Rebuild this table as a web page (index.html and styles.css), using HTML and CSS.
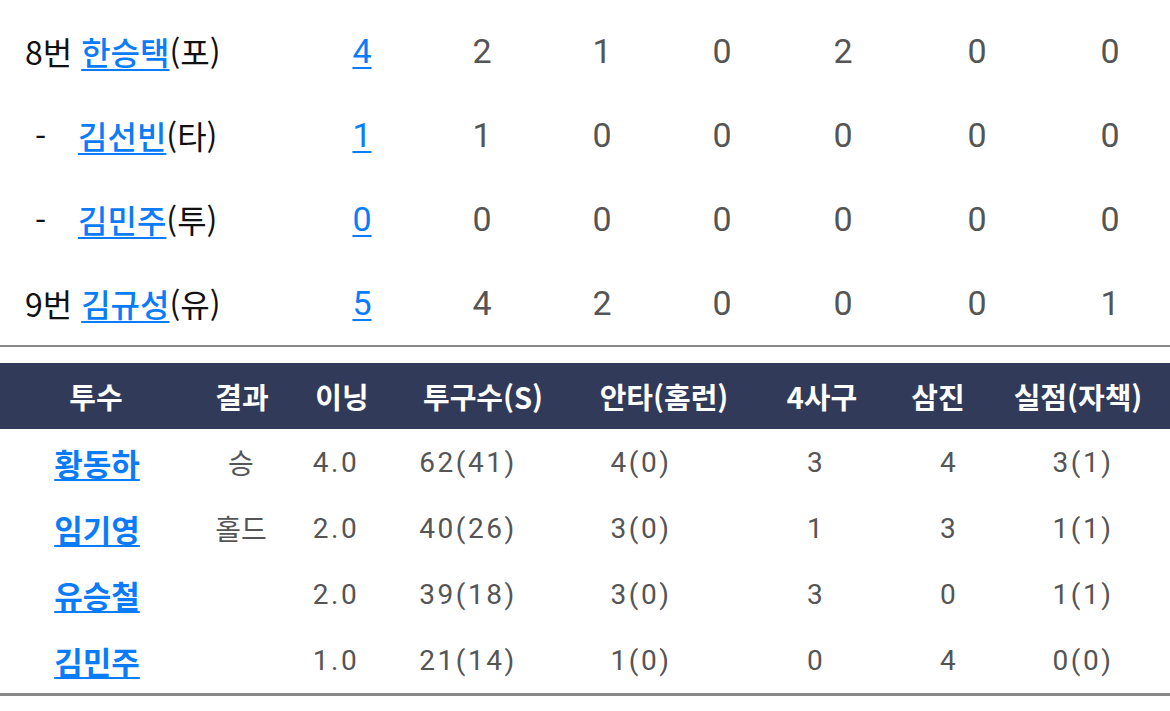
FILE: index.html
```html
<!DOCTYPE html>
<html lang="ko">
<head>
<meta charset="utf-8">
<link rel="stylesheet" href="styles.css">
</head>
<body>
<div class="batting">
  <div class="brow">
    <div class="bname">8번 <a href="#" class="plink">한승택</a>(포)</div>
    <div class="num"><a href="#" class="nlink">4</a></div>
    <div class="num">2</div><div class="num">1</div><div class="num">0</div><div class="num">2</div><div class="num">0</div><div class="num">0</div>
  </div>
  <div class="brow">
    <div class="bname"><span class="dash">-</span><a href="#" class="plink">김선빈</a>(타)</div>
    <div class="num"><a href="#" class="nlink">1</a></div>
    <div class="num">1</div><div class="num">0</div><div class="num">0</div><div class="num">0</div><div class="num">0</div><div class="num">0</div>
  </div>
  <div class="brow">
    <div class="bname"><span class="dash">-</span><a href="#" class="plink">김민주</a>(투)</div>
    <div class="num"><a href="#" class="nlink">0</a></div>
    <div class="num">0</div><div class="num">0</div><div class="num">0</div><div class="num">0</div><div class="num">0</div><div class="num">0</div>
  </div>
  <div class="brow">
    <div class="bname">9번 <a href="#" class="plink">김규성</a>(유)</div>
    <div class="num"><a href="#" class="nlink">5</a></div>
    <div class="num">4</div><div class="num">2</div><div class="num">0</div><div class="num">0</div><div class="num">0</div><div class="num">1</div>
  </div>
</div>

<div class="pitching">
  <div class="phead">
    <div>투수</div><div>결과</div><div>이닝</div><div>투구수(S)</div><div>안타(홈런)</div><div>4사구</div><div>삼진</div><div>실점(자책)</div>
  </div>
  <div class="prow">
    <div><a href="#" class="pname">황동하</a></div><div class="res">승</div><div>4.0</div><div>62(41)</div><div>4(0)</div><div>3</div><div>4</div><div>3(1)</div>
  </div>
  <div class="prow">
    <div><a href="#" class="pname">임기영</a></div><div class="res">홀드</div><div>2.0</div><div>40(26)</div><div>3(0)</div><div>1</div><div>3</div><div>1(1)</div>
  </div>
  <div class="prow">
    <div><a href="#" class="pname">유승철</a></div><div class="res"></div><div>2.0</div><div>39(18)</div><div>3(0)</div><div>3</div><div>0</div><div>1(1)</div>
  </div>
  <div class="prow">
    <div><a href="#" class="pname">김민주</a></div><div class="res"></div><div>1.0</div><div>21(14)</div><div>1(0)</div><div>0</div><div>4</div><div>0(0)</div>
  </div>
</div>
</body>
</html>
```

FILE: styles.css
```css
* { box-sizing: border-box; }
html, body { margin: 0; padding: 0; background: #fff; }
body {
  width: 1170px;
  font-family: Roboto, "Noto Sans CJK KR", sans-serif;
  overflow: hidden;
}

.batting {
  padding-top: 9px;
  border-bottom: 2px solid #888;
}
.brow {
  display: grid;
  grid-template-columns: 302px 120px 120px 120px 120px 122px 146px 120px;
  height: 84px;
  align-items: center;
}
.bname {
  padding-left: 25px;
  font-size: 32px;
  color: #111;
  font-family: "Noto Sans CJK KR", sans-serif;
  white-space: nowrap;
}
.dash {
  display: inline-block;
  margin-left: 10px;
  width: 43px;
}
.plink {
  color: #0a7cfa;
  font-weight: 500;
  text-decoration: underline;
  text-decoration-thickness: 2px;
  text-underline-offset: 4px;
}
.num {
  text-align: center;
  font-family: Roboto, sans-serif;
  font-size: 34px;
  color: #555;
}
.nlink {
  color: #0a7cfa;
  text-decoration: underline;
  text-decoration-thickness: 2px;
  text-underline-offset: 4px;
}

.pitching {
  margin-top: 16px;
  border-bottom: 3px solid #888;
}
.phead {
  display: grid;
  grid-template-columns: 192px 100px 100px 182px 180px 136px 96px 184px;
  height: 66px;
  align-items: center;
  background: #313b59;
  color: #fff;
  font-family: "Noto Sans CJK KR", sans-serif;
  font-weight: 700;
  font-size: 29px;
  text-align: center;
  white-space: nowrap;
}
.prow {
  display: grid;
  grid-template-columns: 194px 94px 96px 168px 178px 172px 94px 174px;
  height: 66px;
  align-items: center;
  text-align: center;
  font-family: Roboto, "Noto Sans CJK KR", sans-serif;
  font-size: 28px;
  letter-spacing: 2.5px;
  color: #555;
  white-space: nowrap;
}
.prow .res {
  font-family: "Noto Sans CJK KR", sans-serif;
  letter-spacing: 0;
}
.pname {
  font-family: "Noto Sans CJK KR", sans-serif;
  font-size: 31px;
  font-weight: 700;
  letter-spacing: 0;
  color: #0a7cfa;
  text-decoration: underline;
  text-decoration-thickness: 2px;
  text-underline-offset: 3px;
}
```
